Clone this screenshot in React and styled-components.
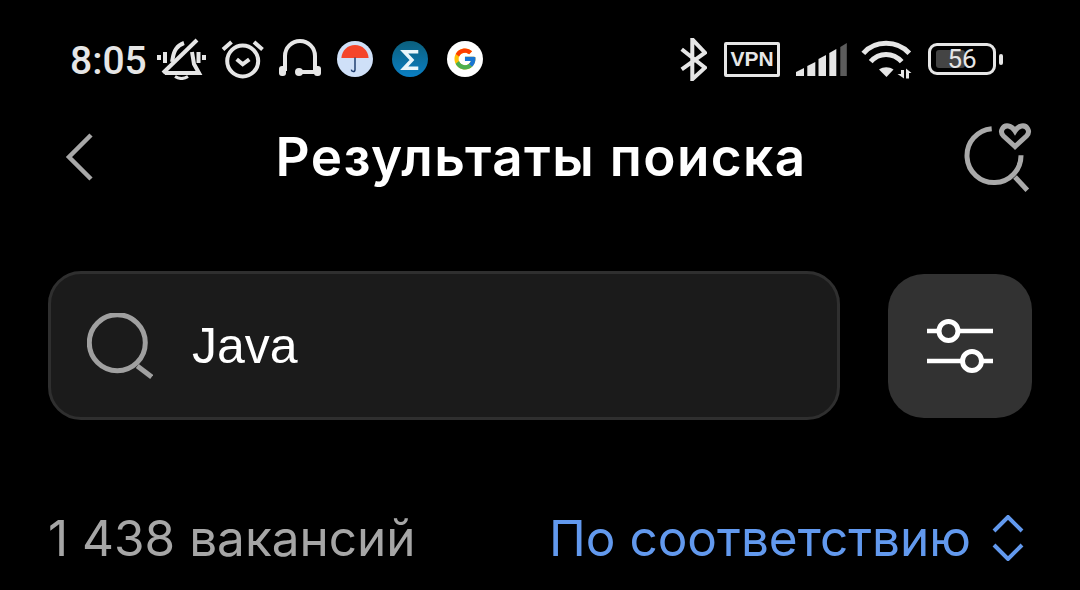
import React from "react";
import styled, { createGlobalStyle } from "styled-components";

const GlobalStyle = createGlobalStyle`
  html, body {
    margin: 0;
    background: #000;
  }
  body {
    font-family: "Inter", "Liberation Sans", sans-serif;
  }
`;

const signalBars = [
  { x: 0, w: 8, top: 25, color: "#e6e6e6" },
  { x: 11.3, w: 8, top: 19, color: "#e6e6e6" },
  { x: 22.5, w: 7.5, top: 12, color: "#e6e6e6" },
  { x: 33.3, w: 7, top: 6, color: "#e6e6e6" },
  { x: 44.3, w: 6.5, top: 0, color: "#5c5c5c" },
];

const App = () => {
  return (
    <Page>
      <GlobalStyle />
      <StatusBar>
        <StatusGroup>
          <Time>8:05</Time>
          <StatusIcon $left={9} width="49" height="42" viewBox="0 0 49 42" strokeWidth="3.5">
            <path d="M2 17v5M8 14v11M41.500 14v11M47 17v5" />
            <path d="M15 24c1-4 1-9 4-13 2-3 5-5 8-6M35 14l2 12 5 9H8" />
            <path d="M40 2 6 35" />
            <path d="M18 38.500c4 2.500 9 2.500 13 0" strokeWidth="3" />
          </StatusIcon>
          <StatusIcon $left={15} width="43" height="40" viewBox="0 0 43 40">
            <circle cx="21.700" cy="22" r="15.500" />
            <path d="M2 10.500 10.500 3M33 3l8.500 7.500M15.700 20.300l6 5 6.600-5" />
          </StatusIcon>
          <StatusIcon $left={15} width="42" height="40" viewBox="0 0 42 40">
            <path d="M6 32V17a15 15 0 0 1 30 0v15" />
            <rect x="0" y="27" width="7" height="10" rx="3" fill="#e6e6e6" stroke="none" />
            <rect x="35" y="27" width="7" height="10" rx="3" fill="#e6e6e6" stroke="none" />
            <circle cx="20" cy="33" r="4" fill="#e6e6e6" stroke="none" />
            <path d="M20 33h16" />
          </StatusIcon>
          <AppIcon $left={16} viewBox="0 0 37 37">
            <circle cx="18.500" cy="18.500" r="18.500" fill="#cfe0f8" />
            <path d="M4.500 17.500C5 9.500 11 4 18.500 4s13.500 5.500 14 13.500z" fill="#f4452b" />
            <path d="M18.500 17v12.500c0 2.500-3.500 2.500-3.800 0" fill="none" stroke="#1d3c6e" strokeWidth="1.500" />
          </AppIcon>
          <AppIcon $left={19} viewBox="0 0 37 37">
            <defs>
              <linearGradient id="sigmaFill" x1="0" y1="0" x2="0" y2="1">
                <stop offset="0" stopColor="#0b5f7c" />
                <stop offset="1" stopColor="#0a7fc4" />
              </linearGradient>
            </defs>
            <circle cx="18.500" cy="18.500" r="18.500" fill="url(#sigmaFill)" />
            <path d="M27 11H12.500l8 8.500-8 8.500H27" fill="none" stroke="#e8f6fb" strokeWidth="3.600" />
          </AppIcon>
          <AppIcon $left={19} viewBox="0 0 37 37">
            <circle cx="18.500" cy="18.500" r="18.500" fill="#fff" />
            <g transform="translate(5.500 5.500) scale(0.54)">
              <path fill="#FFC107" d="M43.611 20.083H42V20H24v8h11.303c-1.649 4.657-6.08 8-11.303 8-6.627 0-12-5.373-12-12s5.373-12 12-12c3.059 0 5.842 1.154 7.961 3.039l5.657-5.657C34.046 6.053 29.268 4 24 4 12.955 4 4 12.955 4 24s8.955 20 20 20 20-8.955 20-20c0-1.341-.138-2.65-.389-3.917z" />
              <path fill="#FF3D00" d="M6.306 14.691l6.571 4.819C14.655 15.108 18.961 12 24 12c3.059 0 5.842 1.154 7.961 3.039l5.657-5.657C34.046 6.053 29.268 4 24 4 16.318 4 9.656 8.337 6.306 14.691z" />
              <path fill="#4CAF50" d="M24 44c5.166 0 9.86-1.977 13.409-5.192l-6.19-5.238A11.91 11.91 0 0124 36c-5.202 0-9.619-3.317-11.283-7.946l-6.522 5.025C9.505 39.556 16.227 44 24 44z" />
              <path fill="#1976D2" d="M43.611 20.083H42V20H24v8h11.303a12.04 12.04 0 01-4.087 5.571l.003-.002 6.19 5.238C36.971 39.205 44 34 44 24c0-1.341-.138-2.65-.389-3.917z" />
            </g>
          </AppIcon>
        </StatusGroup>
        <StatusGroup>
          <StatusIcon width="27" height="43" viewBox="0 0 27 43">
            <path d="M1.700 11.300 25 29.700 12.300 41.300V1.300L25 14.700 1.700 31.300" />
          </StatusIcon>
          <VpnBadge>VPN</VpnBadge>
          <StatusIcon $left={16} width="51" height="33" viewBox="0 0 51 33">
            {signalBars.map((bar) => (
              <path
                key={bar.x}
                d={`M${bar.x} ${bar.top + 4}l${bar.w} -4V33H${bar.x}z`}
                fill={bar.color}
                stroke="none"
              />
            ))}
          </StatusIcon>
          <StatusIcon $left={14} width="51" height="39" viewBox="0 0 51 39">
            <path d="M2.300 13.300C14 0 36 0 48.300 13.300M9.700 21.700C18 12 32 12 40.700 21.700" strokeWidth="5" />
            <path d="M18 29.500c4.500-3 10-3 14.500 0l-7 7.500z" fill="#e6e6e6" stroke="none" />
            <path d="M40 30h3v8.500l-6.500-4.500h3.500zM45 28.500l5.500 4.500H48v5.500h-3z" fill="#e6e6e6" stroke="none" />
          </StatusIcon>
          <Battery>
            <BatteryFill />
            <BatteryLevel>56</BatteryLevel>
          </Battery>
          <BatteryCap />
        </StatusGroup>
      </StatusBar>

      <Header>
        <HeaderIcon width="30" height="48" viewBox="0 0 30 48">
          <path d="M26 2 4 24l22 22" stroke="#a8a8a8" strokeWidth="4.500" />
        </HeaderIcon>
        <Title>Результаты поиска</Title>
        <HeaderIcon width="70" height="69" viewBox="0 0 70 69">
          <path d="M29.700 5.700A27 27 0 1 0 59 32.300M53 54l12.300 13.300" stroke="#a9a9a9" strokeWidth="5" />
          <path
            d="M53 23.500 41.500 13C37 8.500 41 2 46.500 3c3 .5 5 2.500 6.500 5 1.500-2.500 3.500-4.500 6.500-5C65 2 69 8.500 64.500 13z"
            stroke="#a9a9a9"
            strokeWidth="5"
          />
        </HeaderIcon>
      </Header>

      <SearchRow>
        <SearchField>
          <svg width="66" height="66" viewBox="0 0 66 66" fill="none">
            <circle cx="30.300" cy="29.700" r="28" stroke="#a0a0a0" strokeWidth="5" />
            <path d="M50.300 53 64.700 64" stroke="#a0a0a0" strokeWidth="5" />
          </svg>
          <SearchText>Java</SearchText>
        </SearchField>
        <FilterButton>
          <svg width="66" height="54" viewBox="0 0 66 54" fill="none" stroke="#fff" strokeWidth="5">
            <path d="M0 12h12M31 12h35M0 42h35M55 42h11" strokeWidth="4.500" />
            <circle cx="21.500" cy="12" r="9.500" />
            <circle cx="45" cy="42" r="9.500" />
          </svg>
        </FilterButton>
      </SearchRow>

      <ResultsRow>
        <ResultsCount>1 438 вакансий</ResultsCount>
        <SortControl>
          <SortLabel>По соответствию</SortLabel>
          <svg width="32" height="46" viewBox="0 0 32 46" fill="none" stroke="#6299ee" strokeWidth="4">
            <path d="M2 16 16 2l14 14M2 30l14 14 14-14" />
          </svg>
        </SortControl>
      </ResultsRow>
    </Page>
  );
};

export default App;

const Page = styled.main`
  width: 1080px;
  height: 590px;
  box-sizing: border-box;
  padding: 0 48px;
  background: #000;
  overflow: hidden;
`;

const StatusBar = styled.div`
  height: 118px;
  display: flex;
  align-items: center;
  justify-content: space-between;
  padding: 0 29px 0 22px;
`;

const StatusGroup = styled.div`
  display: flex;
  align-items: center;
`;

const Time = styled.span`
  width: 78px;
  padding-top: 3px;
  font-family: "Roboto", sans-serif;
  font-size: 39px;
  font-weight: 500;
  color: #e6e6e6;
`;

const StatusIcon = styled.svg`
  flex: none;
  margin-left: ${(props) => props.$left || 0}px;
  fill: none;
  stroke: #e6e6e6;
  stroke-width: 4;
`;

const AppIcon = styled.svg`
  flex: none;
  width: 36px;
  height: 36px;
  margin-left: ${(props) => props.$left}px;
`;

const VpnBadge = styled.div`
  width: 56px;
  height: 35px;
  margin-left: 17px;
  box-sizing: border-box;
  border: 3.500px solid #e6e6e6;
  border-radius: 2px;
  display: flex;
  align-items: center;
  justify-content: center;
  font-family: "Liberation Sans", sans-serif;
  font-size: 21px;
  font-weight: 700;
  color: #e6e6e6;
`;

const Battery = styled.div`
  position: relative;
  width: 68px;
  height: 32px;
  margin-left: 16px;
  box-sizing: border-box;
  border: 3px solid #e6e6e6;
  border-radius: 9px;
  display: flex;
  align-items: center;
  justify-content: center;
`;

const BatteryFill = styled.div`
  position: absolute;
  left: 5px;
  top: 4px;
  bottom: 4px;
  width: 29px;
  border-radius: 3px;
  background: #444;
`;

const BatteryLevel = styled.span`
  position: relative;
  font-family: "Roboto", sans-serif;
  font-size: 26px;
  color: #e6e6e6;
`;

const BatteryCap = styled.div`
  width: 4px;
  height: 11px;
  margin-left: 3px;
  border-radius: 2px;
  background: #e6e6e6;
`;

const Header = styled.header`
  height: 78px;
  display: flex;
  align-items: center;
  padding-left: 17px;
`;

const HeaderIcon = styled.svg`
  flex: none;
  fill: none;
`;

const Title = styled.h1`
  flex: 1;
  margin: 0;
  padding-left: 25px;
  text-align: center;
  font-size: 53px;
  font-weight: 600;
  letter-spacing: 1.4px;
  color: #fff;
`;

const SearchRow = styled.section`
  margin-top: 75px;
  display: flex;
  align-items: center;
  justify-content: space-between;
`;

const SearchField = styled.div`
  width: 792px;
  height: 149px;
  box-sizing: border-box;
  border: 3px solid #2f2f2f;
  border-radius: 33px;
  background: #1b1b1b;
  display: flex;
  align-items: center;
  gap: 39px;
  padding-left: 36px;
`;

const SearchText = styled.span`
  font-family: "Liberation Sans", sans-serif;
  font-size: 50px;
  color: #fff;
`;

const FilterButton = styled.button`
  width: 144px;
  height: 144px;
  padding: 0;
  border: none;
  border-radius: 36px;
  background: #323232;
  display: flex;
  align-items: center;
  justify-content: center;
`;

const ResultsRow = styled.section`
  margin-top: 88px;
  height: 60px;
  display: flex;
  align-items: center;
  justify-content: space-between;
  padding-right: 8px;
`;

const ResultsCount = styled.span`
  font-size: 49.500px;
  color: #a6a6a6;
`;

const SortControl = styled.div`
  display: flex;
  align-items: center;
  gap: 21px;
`;

const SortLabel = styled.span`
  font-size: 49.500px;
  color: #6299ee;
`;
